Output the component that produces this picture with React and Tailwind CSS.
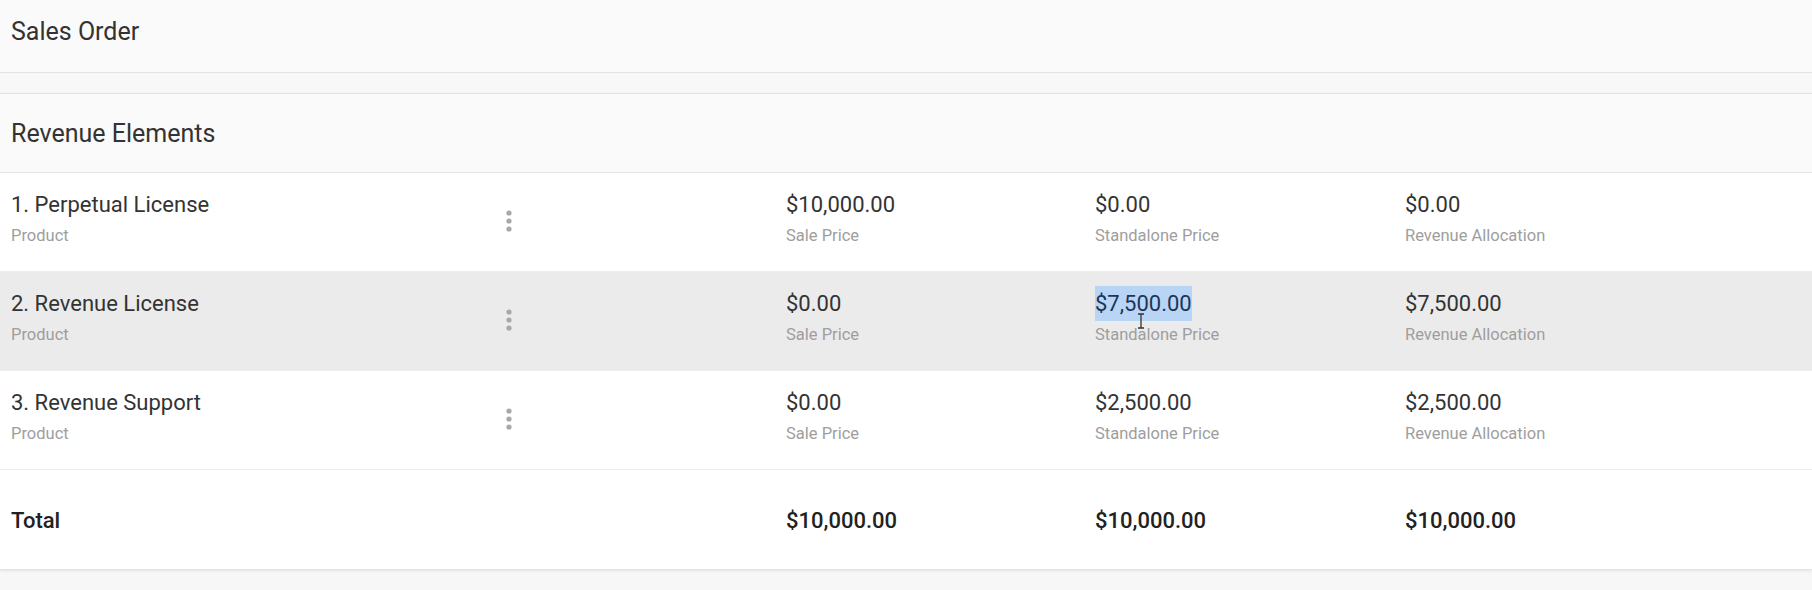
import React from "react";

const rows = [
  { n: "1. Perpetual License", sale: "$10,000.00", sa: "$0.00", ra: "$0.00", hl: false },
  { n: "2. Revenue License", sale: "$0.00", sa: "$7,500.00", ra: "$7,500.00", hl: true },
  { n: "3. Revenue Support", sale: "$0.00", sa: "$2,500.00", ra: "$2,500.00", hl: false },
];

function Dots() {
  return (
    <svg width="10" height="24" viewBox="0 0 10 24" className="block">
      <circle cx="5" cy="4" r="2.6" fill="#a8a8a8" />
      <circle cx="5" cy="12" r="2.6" fill="#a8a8a8" />
      <circle cx="5" cy="20" r="2.6" fill="#a8a8a8" />
    </svg>
  );
}

function Cell({ value, label, selected }) {
  return (
    <div className="flex flex-col">
      <div className="text-[22px] leading-[26px] text-[#333333]">
        {selected ? (
          <span className="relative bg-[#b9d5f5] text-[#1d3557] py-[5px]">
            {value}
            <svg
              width="8"
              height="16"
              viewBox="0 0 8 16"
              className="absolute left-[42px] top-[27px]"
            >
              <path d="M1 1h6M4 1v14M1 15h6" stroke="#333" strokeWidth="1.3" fill="none" />
            </svg>
          </span>
        ) : (
          value
        )}
      </div>
      <div className="mt-[8px] text-[16.5px] leading-[20px] text-[#9e9e9e]">{label}</div>
    </div>
  );
}

export default function App() {
  return (
    <div
      className="w-[1812px] h-[590px] overflow-hidden bg-[#f7f7f7]"
      style={{ fontFamily: "Roboto, 'Liberation Sans', sans-serif" }}
    >
      <div className="h-[73px] bg-[#fafafa] border-b border-[#e2e2e2] shadow-[0_1px_2px_rgba(0,0,0,0.05)] pl-[11px] pt-[17px]">
        <div className="text-[25px] leading-[30px] text-[#333333]">Sales Order</div>
      </div>
      <div className="h-[20px] bg-[#f8f8f8]" />
      <div className="bg-white border-t border-[#e2e2e2] border-b shadow-[0_1px_3px_rgba(0,0,0,0.08)]">
        <div className="h-[79px] bg-[#fafafa] border-b border-[#e4e4e4] flex items-center pl-[11px] pt-[1px]">
          <div className="text-[25px] leading-[30px] text-[#333333]">Revenue Elements</div>
        </div>
        {rows.map((r, i) => (
          <div
            key={i}
            className={
              "h-[99px] grid grid-cols-[483px_30px_262px_309px_310px_1fr] pl-[11px] pt-[19px] border-b border-[#ececec] " +
              (r.hl ? "bg-[#ebebeb]" : "bg-white")
            }
          >
            <div className="flex flex-col">
              <div className="text-[22px] leading-[26px] text-[#333333]">{r.n}</div>
              <div className="mt-[8px] text-[16.5px] leading-[20px] text-[#9e9e9e]">Product</div>
            </div>
            <div className="flex justify-center pt-[17px]">
              <Dots />
            </div>
            <div />
            <Cell value={r.sale} label="Sale Price" />
            <Cell value={r.sa} label="Standalone Price" selected={r.hl} />
            <Cell value={r.ra} label="Revenue Allocation" />
          </div>
        ))}
        <div className="h-[99px] grid grid-cols-[483px_30px_262px_309px_310px_1fr] pl-[11px] pt-[2px] items-center bg-white">
          <div className="text-[22px] leading-[26px] font-medium text-[#222222]">Total</div>
          <div />
          <div />
          <div className="text-[22px] leading-[26px] font-medium text-[#222222]">$10,000.00</div>
          <div className="text-[22px] leading-[26px] font-medium text-[#222222]">$10,000.00</div>
          <div className="text-[22px] leading-[26px] font-medium text-[#222222]">$10,000.00</div>
        </div>
      </div>
    </div>
  );
}
